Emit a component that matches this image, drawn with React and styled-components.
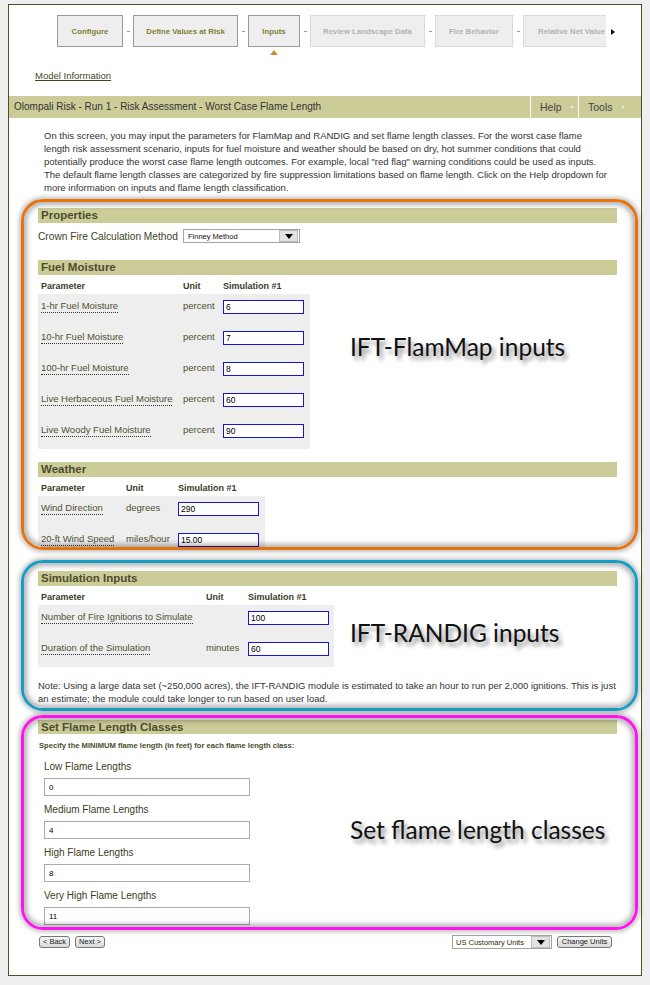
import React from 'react'
import styled, { createGlobalStyle } from 'styled-components'

const GlobalStyle = createGlobalStyle`
  html, body { margin: 0; padding: 0; background: #eeeeee; }
  body { font-family: "Liberation Sans", Arial, sans-serif; }
  * { box-sizing: border-box; }
`

const Panel = styled.div`
  margin: 4px 8px 0 8px;
  width: 634px;
  height: 972px;
  background: #fff;
  border: 1px solid #4b5326;
  display: flex;
  flex-direction: column;
`

const Wizard = styled.div`
  display: flex;
  align-items: flex-start;
  padding: 10px 0 0 48px;
`
const Track = styled.div`
  display: flex;
  width: 549px;
  overflow: hidden;
`
const Step = styled.div`
  display: flex;
  flex-direction: column;
  align-items: center;
  flex: none;
`
const StepBox = styled.div`
  width: ${(p) => p.w}px;
  height: 32px;
  display: flex;
  align-items: center;
  justify-content: ${(p) => (p.lead ? 'flex-start' : 'center')};
  padding-left: ${(p) => p.lead || 0}px;
  background: #eeeeee;
  border: 1px ${(p) => (p.off ? 'dotted #c8c8c8' : 'solid #9a9a9a')};
  color: ${(p) => (p.off ? '#b2b2b2' : '#7e7e34')};
  font-size: 7.8px;
  font-weight: bold;
  white-space: nowrap;
`
const Marker = styled.div`
  margin-top: 3px;
  width: 0;
  height: 0;
  border-left: 4px solid transparent;
  border-right: 4px solid transparent;
  border-bottom: 5px solid #c8932c;
`
const Link = styled.div`
  width: 10px;
  height: 32px;
  flex: none;
  display: flex;
  align-items: center;
  justify-content: center;
  &::before {
    content: '';
    width: 3px;
    height: 1px;
    background: #9a9a9a;
  }
`
const MoreArrow = styled.div`
  margin: 14px 0 0 5px;
  width: 0;
  height: 0;
  border-top: 3.5px solid transparent;
  border-bottom: 3.5px solid transparent;
  border-left: 4px solid #111;
`

const ModelLink = styled.a`
  margin: 15px 0 0 26px;
  align-self: flex-start;
  font-size: 9.5px;
  line-height: 12px;
  color: #414a1c;
  text-decoration: underline;
`

const TitleBar = styled.div`
  margin-top: 14px;
  height: 22px;
  background: #cccc99;
  display: flex;
  align-items: stretch;
`
const Title = styled.div`
  flex: 1;
  padding-left: 5px;
  font-size: 10px;
  line-height: 22px;
  color: #333;
`
const Menu = styled.div`
  width: ${(p) => p.w}px;
  border-left: 1px solid #fff;
  padding-left: 9px;
  display: flex;
  align-items: center;
  gap: 8px;
  font-size: 10.5px;
  color: #444;
  &::after {
    content: '';
    border-left: 2.5px solid transparent;
    border-right: 2.5px solid transparent;
    border-top: 3px solid #ecebd6;
  }
`

const Intro = styled.p`
  margin: 11px 0 0 35px;
  font-size: 9.5px;
  line-height: 13px;
  color: #333;
  white-space: nowrap;
`

const Frame = styled.div`
  position: relative;
  margin: ${(p) => p.gap}px 0 0 12px;
  width: 617px;
  height: ${(p) => p.h}px;
  border: 3px solid ${(p) => p.color};
  border-radius: 22px;
  padding: ${(p) => p.top}px 18px 0 14px;
  overflow: hidden;
  box-shadow: 0 0 4px 2px rgba(0, 0, 0, 0.25);
  &::after {
    content: '';
    position: absolute;
    inset: 0;
    border-radius: 19px;
    box-shadow: inset 0 0 5px 3px rgba(0, 0, 0, 0.3);
    pointer-events: none;
  }
`
const Callout = styled.div`
  position: absolute;
  left: 326px;
  top: ${(p) => p.top}px;
  font-family: Lato, "Open Sans", sans-serif;
  font-size: 24.5px;
  line-height: 30px;
  color: #111;
  white-space: nowrap;
  text-shadow: 3px 4px 4px rgba(0, 0, 0, 0.45);
`

const SectionBar = styled.div`
  margin-top: ${(p) => p.gap || 0}px;
  height: ${(p) => p.h || 15}px;
  background: #cccc99;
  padding-left: 3px;
  font-size: 11.5px;
  font-weight: bold;
  line-height: ${(p) => p.h || 15}px;
  color: #4c4c2e;
`

const FieldLine = styled.div`
  margin-top: 6px;
  display: flex;
  align-items: center;
  height: 14px;
`
const FieldLabel = styled.span`
  width: 145px;
  font-size: 10.2px;
  color: #3b3f24;
`
const Select = styled.div`
  width: ${(p) => p.w}px;
  height: 14px;
  border: 1px solid #a3a3a3;
  background: #fff;
  display: flex;
  align-items: center;
  padding-left: ${(p) => p.pad || 4}px;
  font-size: 7.5px;
  color: ${(p) => p.ink || '#111'};
  span { flex: 1; }
`
const DropButton = styled.div`
  width: 19px;
  height: 12px;
  margin-right: 1px;
  background: #e2e2e2;
  border: 1px solid #bdbdbd;
  display: flex;
  align-items: center;
  justify-content: center;
  &::before {
    content: '';
    border-left: 4px solid transparent;
    border-right: 4px solid transparent;
    border-top: 5px solid #000;
  }
`

const Table = styled.div`
  width: ${(p) => p.w}px;
`
const HeadRow = styled.div`
  display: grid;
  grid-template-columns: ${(p) => p.cols};
  height: 19px;
  padding: 5px 0 0 3px;
  font-size: 9px;
  font-weight: bold;
  line-height: 12px;
  color: #3b3b28;
`
const Body = styled.div`
  background: #eeeeee;
`
const Row = styled.div`
  display: grid;
  grid-template-columns: ${(p) => p.cols};
  height: 31px;
  padding: 6px 0 0 3px;
  align-items: start;
`
const Param = styled.span`
  justify-self: start;
  font-size: 9.5px;
  line-height: 12px;
  color: #4f5030;
  border-bottom: 1px dotted #333;
`
const Unit = styled.span`
  font-size: 9.5px;
  line-height: 12px;
  color: #4f5030;
`
const SimInput = styled.input`
  width: 81px;
  height: 14px;
  border: 1px solid #1414dc;
  padding: 0 2px;
  font-family: "Liberation Sans", Arial, sans-serif;
  font-size: 8.5px;
  color: #000;
  background: #fff;
  outline: none;
`

const Note = styled.p`
  margin: 12px 0 0 0;
  font-size: 9.5px;
  line-height: 13px;
  color: #333;
  white-space: nowrap;
`

const Hint = styled.p`
  margin: 6px 0 0 1px;
  font-size: 7.6px;
  font-weight: bold;
  line-height: 12px;
  color: #4d4d2c;
`
const ClassList = styled.div`
  padding-left: 6px;
`
const ClassLabel = styled.div`
  margin-top: ${(p) => (p.first ? 8 : 7)}px;
  font-size: 10px;
  line-height: 14px;
  color: #3c3c24;
`
const ClassInput = styled.input`
  display: block;
  margin-top: 4px;
  width: 206px;
  height: 18px;
  border: 1px solid #aaaaaa;
  padding: 0 4px;
  font-family: "Liberation Sans", Arial, sans-serif;
  font-size: 8px;
  color: #000;
  background: #fff;
  outline: none;
`

const Footer = styled.div`
  margin-top: 5px;
  display: flex;
  align-items: center;
  justify-content: space-between;
  padding: 0 29px 0 30px;
`
const Group = styled.div`
  display: flex;
  align-items: center;
  gap: 5px;
`
const Button = styled.button`
  width: ${(p) => p.w}px;
  height: 12px;
  padding: 0;
  border: 1px solid #777;
  border-radius: 3px;
  background: linear-gradient(#f6f6f6, #d9d9d9);
  font-family: "Liberation Sans", Arial, sans-serif;
  font-size: 7.5px;
  line-height: 10px;
  color: #222;
`

const fuelCols = '142px 40px 87px'
const weatherCols = '85px 52px 87px'
const simCols = '165px 42px 86px'

const fuel = [
  ['1-hr Fuel Moisture', 'percent', '6'],
  ['10-hr Fuel Moisture', 'percent', '7'],
  ['100-hr Fuel Moisture', 'percent', '8'],
  ['Live Herbaceous Fuel Moisture', 'percent', '60'],
  ['Live Woody Fuel Moisture', 'percent', '90'],
]
const weather = [
  ['Wind Direction', 'degrees', '290'],
  ['20-ft Wind Speed', 'miles/hour', '15.00'],
]
const sims = [
  ['Number of Fire Ignitions to Simulate', '', '100'],
  ['Duration of the Simulation', 'minutes', '60'],
]
const classes = [
  ['Low Flame Lengths', '0'],
  ['Medium Flame Lengths', '4'],
  ['High Flame Lengths', '8'],
  ['Very High Flame Lengths', '11'],
]
const steps = [
  { label: 'Configure', w: 66 },
  { label: 'Define Values at Risk', w: 105 },
  { label: 'Inputs', w: 52, current: true },
  { label: 'Review Landscape Data', w: 115, off: true },
  { label: 'Fire Behavior', w: 78, off: true },
  { label: 'Relative Net Value', w: 105, off: true, lead: 14 },
]

const ParamTable = ({ w, cols, rows }) => (
  <Table w={w}>
    <HeadRow cols={cols}>
      <span>Parameter</span>
      <span>Unit</span>
      <span>Simulation #1</span>
    </HeadRow>
    <Body>
      {rows.map(([name, unit, value]) => (
        <Row cols={cols} key={name}>
          <Param>{name}</Param>
          <Unit>{unit}</Unit>
          <SimInput readOnly value={value} />
        </Row>
      ))}
    </Body>
  </Table>
)

const App = () => {
  return (
    <>
      <GlobalStyle />
      <Panel>
        <Wizard>
          <Track>
            {steps.map((s, i) => (
              <React.Fragment key={s.label}>
                {i > 0 && <Link />}
                <Step>
                  <StepBox w={s.w} off={s.off} lead={s.lead}>{s.label}</StepBox>
                  {s.current && <Marker />}
                </Step>
              </React.Fragment>
            ))}
          </Track>
          <MoreArrow />
        </Wizard>

        <ModelLink>Model Information</ModelLink>

        <TitleBar>
          <Title>Olompali Risk - Run 1 - Risk Assessment - Worst Case Flame Length</Title>
          <Menu w={48}>Help</Menu>
          <Menu w={63}>Tools</Menu>
        </TitleBar>

        <Intro>
          On this screen, you may input the parameters for FlamMap and RANDIG and set flame length classes. For the worst case flame
          <br />
          length risk assessment scenario, inputs for fuel moisture and weather should be based on dry, hot summer conditions that could
          <br />
          potentially produce the worst case flame length outcomes. For example, local "red flag" warning conditions could be used as inputs.
          <br />
          The default flame length classes are categorized by fire suppression limitations based on flame length. Click on the Help dropdown for
          <br />
          more information on inputs and flame length classification.
        </Intro>

        <Frame color="#e8720e" gap={5} h={351} top={6}>
          <SectionBar>Properties</SectionBar>
          <FieldLine>
            <FieldLabel>Crown Fire Calculation Method</FieldLabel>
            <Select w={117}>
              <span>Finney Method</span>
              <DropButton />
            </Select>
          </FieldLine>
          <SectionBar gap={17}>Fuel Moisture</SectionBar>
          <ParamTable w={272} cols={fuelCols} rows={fuel} />
          <SectionBar gap={13}>Weather</SectionBar>
          <ParamTable w={227} cols={weatherCols} rows={weather} />
          <Callout top={130}>IFT-FlamMap inputs</Callout>
        </Frame>

        <Frame color="#179dc3" gap={10} h={151} top={8}>
          <SectionBar>Simulation Inputs</SectionBar>
          <ParamTable w={296} cols={simCols} rows={sims} />
          <Note>
            Note: Using a large data set (~250,000 acres), the IFT-RANDIG module is estimated to take an hour to run per 2,000 ignitions. This is just
            <br />
            an estimate; the module could take longer to run based on user load.
          </Note>
          <Callout top={55}>IFT-RANDIG inputs</Callout>
        </Frame>

        <Frame color="#ff14f0" gap={4} h={215} top={2}>
          <SectionBar h={14}>Set Flame Length Classes</SectionBar>
          <Hint>Specify the MINIMUM flame length (in feet) for each flame length class:</Hint>
          <ClassList>
            {classes.map(([label, value], i) => (
              <React.Fragment key={label}>
                <ClassLabel first={i === 0}>{label}</ClassLabel>
                <ClassInput readOnly value={value} />
              </React.Fragment>
            ))}
          </ClassList>
          <Callout top={97}>Set flame length classes</Callout>
        </Frame>

        <Footer>
          <Group>
            <Button w={31}>&lt; Back</Button>
            <Button w={30}>Next &gt;</Button>
          </Group>
          <Group>
            <Select w={100} pad={3} ink="#33280a">
              <span>US Customary Units</span>
              <DropButton />
            </Select>
            <Button w={55}>Change Units</Button>
          </Group>
        </Footer>
      </Panel>
    </>
  )
}

export default App
